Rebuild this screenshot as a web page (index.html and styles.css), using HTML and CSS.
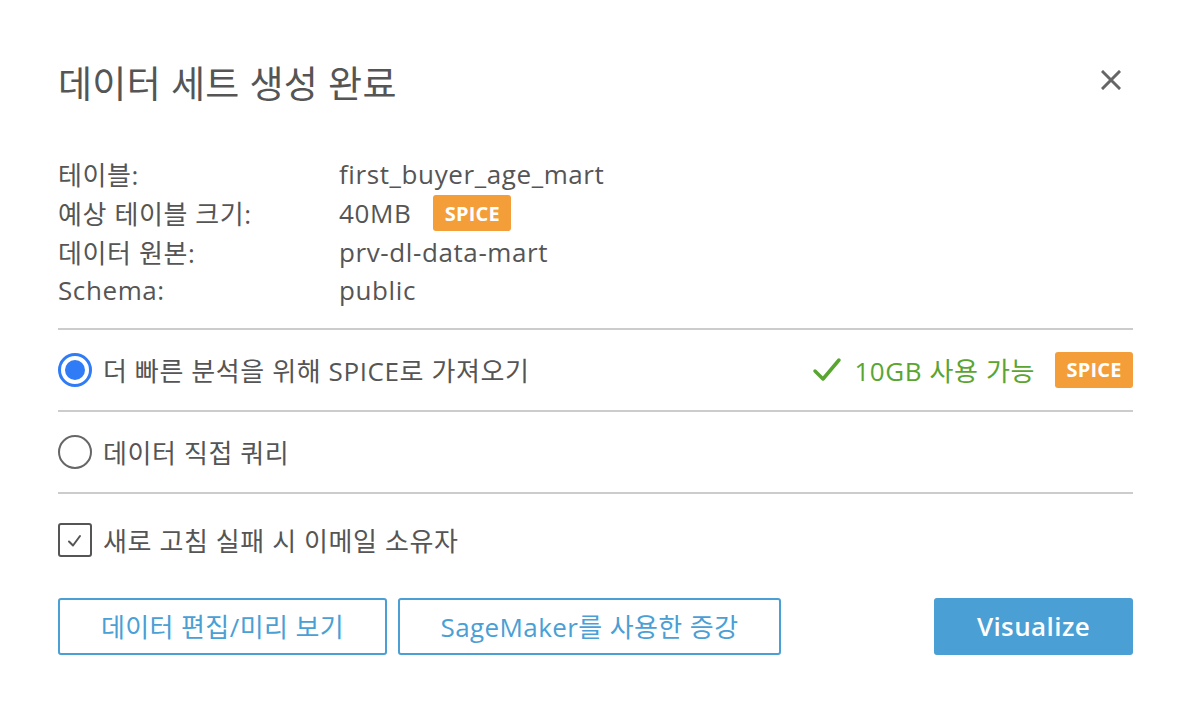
FILE: index.html
```html
<!DOCTYPE html>
<html lang="ko">
<head>
<meta charset="utf-8">
<link rel="stylesheet" href="styles.css">
</head>
<body>
<div class="dialog">
  <div class="header">
    <h1 class="title">데이터 세트 생성 완료</h1>
    <button class="close" aria-label="닫기">
      <svg width="20" height="20" viewBox="0 0 20 20"><path d="M2 2 L18 18 M18 2 L2 18" stroke="#666" stroke-width="3" stroke-linecap="square"/></svg>
    </button>
  </div>

  <div class="info">
    <div class="label">테이블:</div><div class="value">first_buyer_age_mart</div>
    <div class="label">예상 테이블 크기:</div><div class="value">40MB <span class="badge">SPICE</span></div>
    <div class="label">데이터 원본:</div><div class="value">prv-dl-data-mart</div>
    <div class="label">Schema:</div><div class="value">public</div>
  </div>

  <div class="option sep">
    <span class="radio checked"><span class="dot"></span></span>
    <span class="opt-text">더 빠른 분석을 위해 SPICE로 가져오기</span>
    <span class="avail">
      <svg class="check" width="30" height="26" viewBox="0 0 30 26"><path d="M3 14 L11 22 L27 3" fill="none" stroke="#5aa532" stroke-width="3.5" stroke-linecap="round" stroke-linejoin="round"/></svg>
      10GB 사용 가능
    </span>
    <span class="badge">SPICE</span>
  </div>

  <div class="option sep">
    <span class="radio"></span>
    <span class="opt-text">데이터 직접 쿼리</span>
  </div>

  <div class="option check-row sep">
    <span class="checkbox">
      <svg width="20" height="20" viewBox="0 0 20 20"><path d="M4 11.5 L8 15.5 L15 6" fill="none" stroke="#555" stroke-width="2" stroke-linecap="round" stroke-linejoin="round"/></svg>
    </span>
    <span class="opt-text">새로 고침 실패 시 이메일 소유자</span>
  </div>

  <div class="actions">
    <button class="btn outline btn-edit">데이터 편집/미리 보기</button>
    <button class="btn outline btn-sage">SageMaker를 사용한 증강</button>
    <button class="btn primary">Visualize</button>
  </div>
</div>
</body>
</html>
```

FILE: styles.css
```css
html, body {
  margin: 0;
  padding: 0;
  background: #ffffff;
}

body {
  font-family: "Open Sans", "Noto Sans CJK KR", sans-serif;
  color: #555555;
}

.dialog {
  padding: 56px 57px 0 58px;
}

.header {
  display: flex;
  justify-content: space-between;
  align-items: flex-start;
}

.title {
  margin: 0;
  font-size: 37px;
  font-weight: 400;
  line-height: 56px;
  color: #555555;
  letter-spacing: 0.3px;
}

.close {
  border: 0;
  background: none;
  padding: 0;
  margin: 14px 12px 0 0;
  width: 20px;
  height: 20px;
  cursor: pointer;
}

.close svg {
  display: block;
}

.info {
  display: grid;
  grid-template-columns: 281px 1fr;
  grid-auto-rows: 38.7px;
  align-items: center;
  margin-top: 43px;
  margin-bottom: 18px;
  font-size: 26px;
  letter-spacing: 0.6px;
}

.value {
  display: flex;
  align-items: center;
  gap: 22px;
}

.badge {
  display: inline-flex;
  align-items: center;
  justify-content: center;
  width: 78px;
  height: 36px;
  border-radius: 3px;
  background: #f39e39;
  color: #ffffff;
  font-size: 20px;
  font-weight: 700;
  letter-spacing: 0.2px;
  flex: none;
}

.sep {
  border-top: 2px solid #cccccc;
}

.option {
  display: flex;
  align-items: center;
  height: 80px;
  font-size: 26px;
  letter-spacing: 0.6px;
}

.option.check-row {
  height: 106px;
  padding-bottom: 12px;
  box-sizing: border-box;
}

.radio {
  width: 30px;
  height: 30px;
  border-radius: 50%;
  border: 2px solid #666666;
  display: flex;
  align-items: center;
  justify-content: center;
  flex: none;
  margin-right: 11px;
}

.radio.checked {
  border: 3px solid #2f7cf6;
  width: 28px;
  height: 28px;
}

.radio .dot {
  width: 20px;
  height: 20px;
  border-radius: 50%;
  background: #2f7cf6;
}

.checkbox {
  width: 30px;
  height: 30px;
  border: 2px solid #555555;
  border-radius: 3px;
  display: flex;
  align-items: center;
  justify-content: center;
  flex: none;
  margin-right: 11px;
}

.checkbox svg {
  display: block;
}

.opt-text {
  flex: 1;
}

.avail {
  display: flex;
  align-items: center;
  gap: 12px;
  color: #5aa532;
  margin-right: 20px;
}

.check {
  display: block;
}

.actions {
  display: flex;
  align-items: center;
  gap: 11px;
}

.btn {
  height: 57px;
  border-radius: 3px;
  font-family: "Open Sans", "Noto Sans CJK KR", sans-serif;
  font-size: 26px;
  letter-spacing: 0.4px;
  cursor: pointer;
  box-sizing: border-box;
}

.btn.outline {
  background: #ffffff;
  border: 2px solid #4a9fd5;
  color: #4a9fd5;
}

.btn-edit {
  width: 329px;
}

.btn-sage {
  width: 383px;
}

.btn.primary {
  margin-left: auto;
  width: 199px;
  background: #4a9fd5;
  border: 0;
  color: #ffffff;
  font-weight: 600;
}
```
